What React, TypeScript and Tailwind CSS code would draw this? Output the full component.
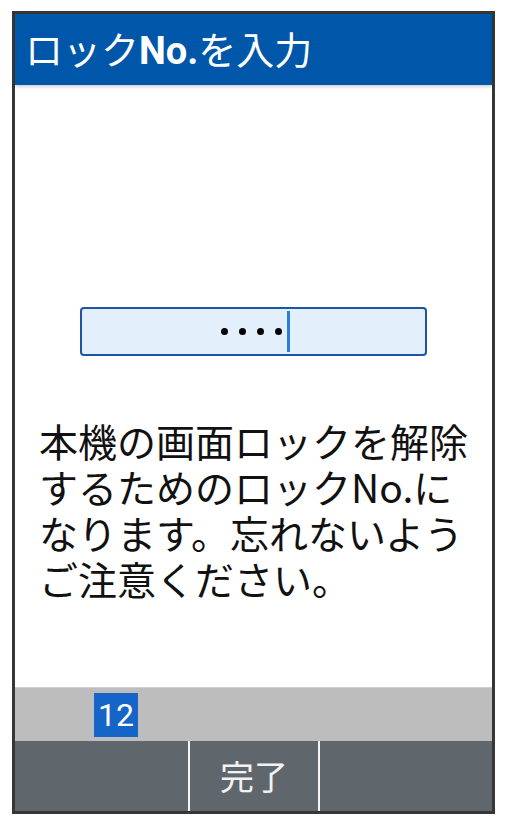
import React from 'react';

const jp = { fontFamily: '"Noto Sans CJK JP", "Noto Sans", sans-serif' };
const latin = { fontFamily: 'Roboto, "Noto Sans CJK JP", sans-serif' };

const lines = [
    '本機の画面ロックを解除',
    'するためのロックNo.に',
    'なります。忘れないよう',
    'ご注意ください。',
];

export default function App() {
    return (
        <div className="w-[507px] h-[826px] bg-white pt-[11px] pl-[12px]" style={jp}>
            <div className="w-[483px] h-[803px] border-[3px] border-[#363636] flex flex-col bg-white">
                {/* header */}
                <div className="h-[71px] shrink-0 bg-[#0057aa] flex items-center pl-[10px] relative z-10 shadow-[0_2px_3px_rgba(0,0,0,0.18)]">
                    <span className="text-white text-[38px] leading-none">
                        ロック<span className="font-bold" style={latin}>No.</span>を入力
                    </span>
                </div>

                {/* content */}
                <div className="flex-1 flex flex-col">
                    <div className="mt-[222px] ml-[65px] w-[347px] h-[49px] border-2 border-[#1b55a3] rounded-[4px] bg-[#e3f0fc] flex items-center justify-center">
                        <div className="flex items-center gap-[11px] ml-[4px]">
                            <span className="w-[7px] h-[7px] rounded-full bg-black" />
                            <span className="w-[7px] h-[7px] rounded-full bg-black" />
                            <span className="w-[7px] h-[7px] rounded-full bg-black" />
                            <span className="w-[7px] h-[7px] rounded-full bg-black" />
                        </div>
                        <span className="ml-[5px] w-[3px] h-[41px] bg-[#2a7ee3]" />
                    </div>

                    <div className="mt-[61px] pl-[24px] text-[39px] leading-[46px] text-[#111]">
                        {lines.map((l) => (
                            <div key={l} className="whitespace-nowrap">{l}</div>
                        ))}
                    </div>
                </div>

                {/* candidate bar */}
                <div className="h-[54px] shrink-0 bg-[#bdbdbd] border-t border-[#cfcfcf] flex items-center pl-[79px]">
                    <div className="w-[44px] h-[44px] bg-[#1565c8] flex items-center justify-center text-white text-[32px] leading-none" style={latin}>
                        12
                    </div>
                </div>

                {/* soft keys */}
                <div className="h-[70px] shrink-0 bg-[#5f676d] flex">
                    <div className="w-[173px]" />
                    <div className="w-[2px] bg-[#f4f4f4]" />
                    <div className="w-[128px] flex items-center justify-center text-[#f2f2f2] text-[34px] leading-none">
                        完了
                    </div>
                    <div className="w-[2px] bg-[#f4f4f4]" />
                    <div className="flex-1" />
                </div>
            </div>
        </div>
    );
}
